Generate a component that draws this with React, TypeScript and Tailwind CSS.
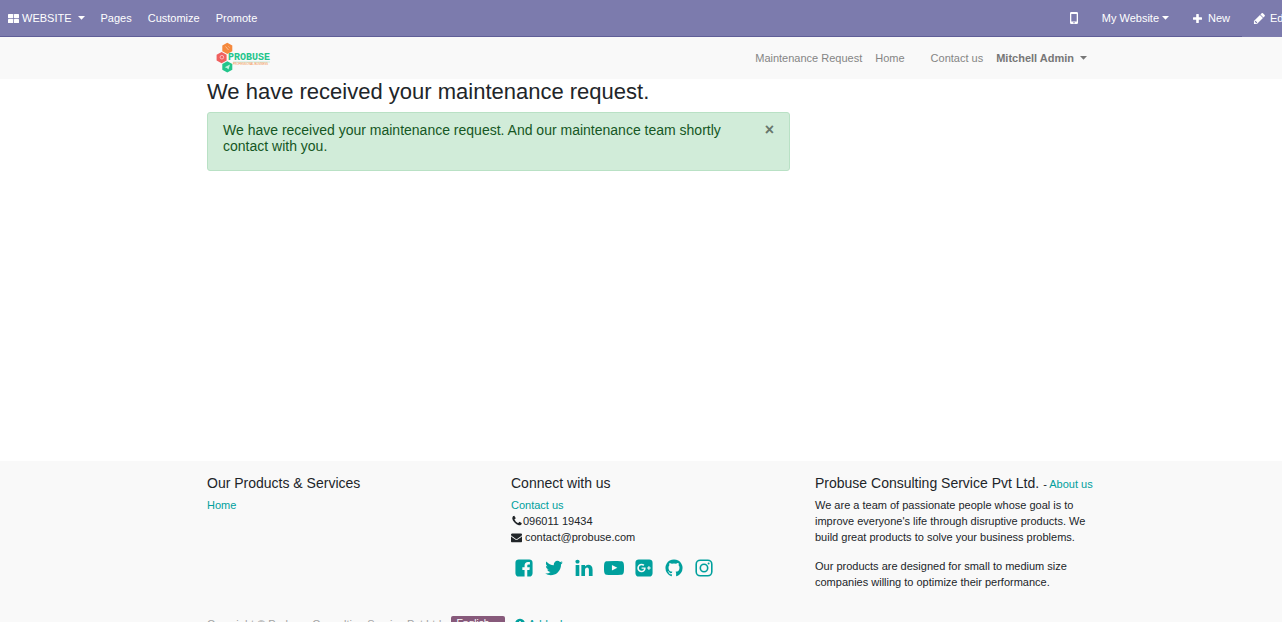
import type { ReactNode } from 'react'

const paths = {
  facebook:
    'M1376 128q119 0 203.5 84.5t84.5 203.5v960q0 119-84.5 203.5t-203.5 84.5h-188v-595h199l30-232h-229v-148q0-56 23.5-84t91.5-28l122-1v-207q-63-9-178-9-136 0-217.5 80t-81.5 226v171h-200v232h200v595h-532q-119 0-203.5-84.5t-84.5-203.5v-960q0-119 84.5-203.5t203.5-84.5h960z',
  twitter:
    'M1684 408q-67 98-162 167 1 14 1 42 0 130-38 259.5t-115.5 248.5-184.5 210.5-258 146-323 54.5q-271 0-496-145 35 4 78 4 225 0 401-138-105-2-188-64.5t-114-159.5q33 5 61 5 43 0 85-11-112-23-185.5-111.5t-73.5-205.5v-4q68 38 146 41-66-44-105-115t-39-154q0-88 44-163 121 149 294.5 238.5t371.5 99.5q-8-38-8-74 0-134 94.5-228.5t228.5-94.5q140 0 236 102 109-21 205-78-37 115-142 178 93-10 186-50z',
  linkedin:
    'M477 625v991h-330v-991h330zm21-306q1 73-50.5 122t-135.5 49h-2q-82 0-132-49t-50-122q0-74 51.5-122.5t134.5-48.5 133 48.5 51 122.5zm1166 729v568h-329v-530q0-105-40.5-164.5t-126.5-59.5q-63 0-105.5 34.5t-63.5 85.5q-11 30-11 81v553h-329q2-399 2-647t-1-296l-1-48h329v144h-2q20-32 41-56t56.5-52 87-43.5 114.5-15.5q171 0 275 113.5t104 332.5z',
  youtube:
    'M711 1128l484-250-484-253v503zm185-862q168 0 324.5 4.5t229.5 9.5l73 4q1 0 17 1.5t23 3 23.5 4.5 28.5 8 28 13 31 19.5 29 26.5q6 6 15.5 18.5t29 58.5 26.5 101q8 64 12.5 136.5t5.5 113.5v176q1 145-18 290-7 55-25 99.5t-32 61.5l-14 17q-14 15-29 26.5t-31 19-28 12.5-28.5 8-24 4.5-23 3-16.5 1.5q-251 19-627 19-207-2-359.5-6.5t-200.5-7.5l-49-4-36-4q-36-5-54.5-10t-51-21-56.5-41q-6-6-15.5-18.5t-29-58.5-26.5-101q-8-64-12.5-136.5t-5.5-113.5v-176q-1-145 18-290 7-55 25-99.5t32-61.5l14-17q14-15 29-26.5t31-19.5 28-13 28.5-8 23.5-4.5 23-3 17-1.5q251-18 627-18z',
  google:
    'M1045 905q0-26-6-64h-362v132h217q-3 24-16.5 50t-37.5 53-66.5 44.5-96.5 17.5q-99 0-169-71t-70-171 70-171 169-71q92 0 153 59l104-101q-108-100-257-100-160 0-272 112.5t-112 271.5 112 271.5 272 112.5q165 0 266.5-105t101.5-270zm345 46h109v-110h-109v-110h-110v110h-110v110h110v110h110v-110zm274-535v960q0 119-84.5 203.5t-203.5 84.5h-960q-119 0-203.5-84.5t-84.5-203.5v-960q0-119 84.5-203.5t203.5-84.5h960q119 0 203.5 84.5t84.5 203.5z',
  github:
    'M896 128q209 0 385.5 103t279.5 279.5 103 385.5q0 251-146.5 451.5t-378.5 277.5q-27 5-40-7t-13-30q0-3 .5-76.5t.5-134.5q0-97-52-142 57-6 102.5-18t94-39 81-66.5 53-105 20.5-150.5q0-119-79-206 37-91-8-204-28-9-81 11t-92 44l-38 24q-93-26-192-26t-192 26q-16-11-42.5-27t-83.5-38.5-85-13.5q-45 113-8 204-79 87-79 206 0 85 20.5 150t52.5 105 80.5 67 94 39 102.5 18q-39 36-49 103-21 10-45 15t-57 5-65.5-21.5-55.5-62.5q-19-32-48.5-52t-49.5-24l-20-3q-21 0-29 4.5t-5 11.5 9 14 13 12l7 5q22 10 43.5 38t31.5 51l10 23q13 38 44 61.5t67 30 69.5 7 55.5-3.5l23-4q0 38 .5 88.500t.5 54.5q0 18-13 30t-40 7q-232-77-378.5-277.5t-146.5-451.5q0-209 103-385.5t279.5-279.5 385.5-103z',
  phone:
    'M1600 1240q0 27-10 70.5t-21 68.5q-21 50-122 106-94 51-186 51-27 0-53-3.5t-57.5-12.5-47-14.5-55.5-20.5-49-18q-98-35-175-83-127-79-264-216t-216-264q-48-77-83-175-3-9-18-49t-20.5-55.5-14.5-47-12.5-57.5-3.5-53q0-92 51-186 56-101 106-122 25-11 68.5-21t70.5-10q14 0 21 3 18 6 53 76 11 19 30 54t35 63.5 31 53.5q3 4 17.5 25t21.5 35.5 7 28.5q0 20-28.5 50t-62 55-62 53-28.5 46q0 9 5 22.5t8.5 20.5 14 24 11.5 19q76 137 174 235t235 174q2 1 19 11.5t24 14 20.5 8.5 22.5 5q18 0 46-28.5t53-62 55-62 50-28.5q14 0 28.5 7t35.5 21.5 25 17.5q25 15 53.5 31t63.5 35 54 30q70 35 76 53 3 7 3 21z',
  envelope:
    'M1792 710v794q0 66-47 113t-113 47h-1472q-66 0-113-47t-47-113v-794q44 49 101 87 362 246 497 345 57 42 92.5 65.5t94.5 48 110 24.5h2q51 0 110-24.5t94.5-48 92.5-65.5q170-123 498-345 57-39 100-87zm0-294q0 79-49 151t-122 123q-376 261-468 325-10 7-42.5 31t-54 38.5-52 32.5-57.5 27-50 9h-2q-23 0-50-9t-57.5-27-52-32.5-54-38.5-42.5-31q-91-64-262-182.5t-205-142.5q-62-42-117-115.5t-55-136.5q0-78 41.5-130t118.5-52h1472q65 0 112.5 47t47.5 113z',
  pencil:
    'M491 1536l91-91-235-235-91 91v107h128v128h107zm469-1120l416 416-832 832h-416v-416zm683 96q0 53-37 90l-166 166-416-416 166-165q36-38 90-38 53 0 91 38l235 234q37 39 37 91z',
  plusCircle:
    'M1344 960v-128q0-26-19-45t-45-19h-256v-256q0-26-19-45t-45-19h-128q-26 0-45 19t-19 45v256h-256q-26 0-45 19t-19 45v128q0 26 19 45t45 19h256v256q0 26 19 45t45 19h128q26 0 45-19t19-45v-256h256q26 0 45-19t19-45zm320-64q0 209-103 385.5t-279.5 279.5-385.5 103-385.5-103-279.5-279.5-103-385.5 103-385.5 279.5-279.5 385.5-103 385.5 103 279.5 279.5 103 385.5z',
}

function Icon({ name, className }: { name: keyof typeof paths; className: string }) {
  return (
    <svg viewBox="0 0 1792 1792" fill="currentColor" className={className} aria-hidden="true">
      <path d={paths[name]} />
    </svg>
  )
}

function Instagram() {
  return (
    <svg viewBox="0 0 20 20" fill="none" stroke="currentColor" className="size-5" aria-hidden="true">
      <rect x="2.2" y="2.2" width="15.6" height="15.6" rx="4" strokeWidth="1.6" />
      <circle cx="10" cy="10" r="3.7" strokeWidth="1.6" />
      <circle cx="14.6" cy="5.4" r="1" fill="currentColor" stroke="none" />
    </svg>
  )
}

function Caret() {
  return (
    <svg viewBox="0 0 7 4" fill="currentColor" className="h-1 w-[7px]" aria-hidden="true">
      <path d="M0 0h7L3.5 3.7z" />
    </svg>
  )
}

function Logo() {
  return (
    <svg viewBox="0 0 56 32" className="h-8 w-14" role="img" aria-label="Probuse">
      <path d="M11.300 .8l5 2.800v5.600l-5 2.800-5-2.800V3.600z" fill="#f5893d" />
      <path d="M5.600 10l5 2.800v5.600l-5 2.800-5-2.800v-5.600z" fill="#f0605f" />
      <path d="M11.300 19.300l5 2.800v5.600l-5 2.800-5-2.800v-5.600z" fill="#23c58b" />
      <path d="M9.500 4.500l3 3.500M12.500 4.500l1 1" stroke="#fbc39a" strokeWidth="1" />
      <circle cx="5.900" cy="15.200" r="1.800" fill="none" stroke="#fbc4c4" strokeWidth=".9" />
      <path d="M8.700 25.300l5.300-2.700-1.500 5-1.600-1.700z" fill="#c3f3df" />
      <text x="12" y="18" fill="#23c58b" fontFamily="Liberation Mono, monospace" fontWeight="700" fontSize="10">
        PROBUSE
      </text>
      <path d="M17 20h37" stroke="#a5e2c8" strokeWidth=".6" />
      <text x="17" y="23" fill="#f5893d" fontFamily="Liberation Sans, sans-serif" fontSize="2.700">
        PROFESSIONAL BUSINESS
      </text>
    </svg>
  )
}

function FooterLink({ children }: { children: ReactNode }) {
  return (
    <a href="#" className="text-[#00a09d]">
      {children}
    </a>
  )
}

const social: { label: string; icon: ReactNode }[] = [
  { label: 'Facebook', icon: <Icon name="facebook" className="size-5" /> },
  { label: 'Twitter', icon: <Icon name="twitter" className="size-5" /> },
  { label: 'LinkedIn', icon: <Icon name="linkedin" className="size-5" /> },
  { label: 'YouTube', icon: <Icon name="youtube" className="size-5" /> },
  { label: 'Google Plus', icon: <Icon name="google" className="size-5" /> },
  { label: 'GitHub', icon: <Icon name="github" className="size-5" /> },
  { label: 'Instagram', icon: <Instagram /> },
]

export default function App() {
  return (
    <div className="h-screen overflow-x-hidden overflow-y-auto bg-white font-['Liberation_Sans',Arial,sans-serif] text-[11px] leading-4 text-[#212529] [scrollbar-width:none]">
      <div className="w-[calc(100%+12px)]">
        <nav className="flex h-[37px] justify-between bg-[#7c7bad] text-white">
          <div className="flex flex-1 items-center gap-4 border-b border-[#5f5e97] pl-2">
            <button className="flex items-center">
              <svg viewBox="0 0 11 9" fill="currentColor" className="mr-[3px] h-[9px] w-[11px]" aria-hidden="true">
                <rect width="5.200" height="4.200" rx=".6" />
                <rect x="5.900" width="5.100" height="4.200" rx=".6" />
                <rect y="4.900" width="5.200" height="4.100" rx=".6" />
                <rect x="5.900" y="4.900" width="5.100" height="4.100" rx=".6" />
              </svg>
              <span className="mr-[6px]">WEBSITE</span>
              <Caret />
            </button>
            <a href="#">Pages</a>
            <button>Customize</button>
            <button>Promote</button>
          </div>
          <div className="flex items-center gap-6 border-b border-[#5f5e97] pr-3">
            <button aria-label="Mobile preview">
              <svg viewBox="0 0 8 12" className="block h-3 w-2" aria-hidden="true">
                <path
                  fill="currentColor"
                  fillRule="evenodd"
                  d="M1.300 0h5.400Q8 0 8 1.300v9.400Q8 12 6.700 12H1.300Q0 12 0 10.700V1.300Q0 0 1.300 0zM1.300 2v7.500h5.400V2zM4 10.100a.7.7 0 1 0 0 1.400.7.7 0 0 0 0-1.400z"
                />
              </svg>
            </button>
            <button className="flex items-center gap-[3px]">
              My Website
              <Caret />
            </button>
            <button className="flex items-center gap-[6px]">
              <svg viewBox="0 0 9 9" fill="currentColor" className="size-[9px]" aria-hidden="true">
                <path d="M3.200 .5q0-.5.500-.5h1.600q.5 0 .5.500v2.700h2.700q.5 0 .5.500v1.600q0 .5-.5.500H5.800v2.700q0 .5-.5.500H3.700q-.5 0-.5-.5V5.800H.5q-.5 0-.5-.5V3.700q0-.5.500-.5h2.700z" />
              </svg>
              New
            </button>
          </div>
          <button className="flex items-center gap-1 border-b border-transparent pr-[5px] pl-[11px]">
            <Icon name="pencil" className="size-[13px]" />
            Edit
          </button>
        </nav>

        <header className="bg-[#f9f9f9]">
          <div className="mx-auto flex h-[42px] w-[912px] items-center justify-between px-4 text-[#858585]">
            <a href="#" className="pl-[9px]">
              <Logo />
            </a>
            <nav className="flex items-center gap-[13px]">
              <a href="#">Maintenance Request</a>
              <a href="#" className="pr-[13px]">
                Home
              </a>
              <a href="#">Contact us</a>
              <button className="flex items-center gap-[6px] font-bold text-[#777777]">
                Mitchell Admin
                <Caret />
              </button>
            </nav>
          </div>
        </header>

        <main className="mx-auto min-h-[382px] w-[912px] px-4">
          <h1 className="pt-px text-[22px] leading-6">We have received your maintenance request.</h1>
          <div
            role="alert"
            className="mt-2 flex w-[583px] items-start justify-between rounded-[3px] border border-[#b9e1c5] bg-[#d1ecd9] px-[15px] pt-[9px] pb-4 text-[14px] text-[#155724]"
          >
            <p className="max-w-[510px]">
              We have received your maintenance request. And our maintenance team shortly contact with you.
            </p>
            <button aria-label="Close" className="text-[16px] font-bold text-[#68766c]">
              ×
            </button>
          </div>
        </main>

        <footer className="bg-[#f9f9f9] pt-[14px]">
          <div className="mx-auto w-[912px]">
            <div className="grid min-h-[140px] grid-cols-3">
              <section className="pl-4">
                <h2 className="mb-[6px] text-[14px]">Our Products &amp; Services</h2>
                <FooterLink>Home</FooterLink>
              </section>
              <section className="pl-4">
                <h2 className="mb-[6px] text-[14px]">Connect with us</h2>
                <FooterLink>Contact us</FooterLink>
                <p className="flex items-center">
                  <Icon name="phone" className="size-[12px]" />
                  096011 19434
                </p>
                <p className="flex items-center gap-[3px]">
                  <Icon name="envelope" className="size-[11px]" />
                  contact@probuse.com
                </p>
                <div className="mt-[13px] flex gap-[10px] pl-[3px] text-[#00a09d]">
                  {social.map(({ label, icon }) => (
                    <a key={label} href="#" aria-label={label}>
                      {icon}
                    </a>
                  ))}
                </div>
              </section>
              <section className="pl-4">
                <div className="mb-[5px] flex items-baseline gap-1 whitespace-nowrap">
                  <h2 className="text-[14px]">Probuse Consulting Service Pvt Ltd.</h2>
                  <span>
                    - <FooterLink>About us</FooterLink>
                  </span>
                </div>
                <p className="mb-[13px] max-w-[280px]">
                  We are a team of passionate people whose goal is to improve everyone's life through disruptive
                  products. We build great products to solve your business problems.
                </p>
                <p className="max-w-[280px]">
                  Our products are designed for small to medium size companies willing to optimize their performance.
                </p>
              </section>
            </div>
            <div className="flex items-center px-4 pb-4 text-[#a3a3a3]">
              <span>Copyright © Probuse Consulting Service Pvt Ltd.</span>
              <button className="mt-px ml-[7px] flex items-center gap-1 rounded-[2px] bg-[#875a7b] px-[5px] text-[10px] text-white">
                English
                <Caret />
              </button>
              <a href="#" className="ml-[9px] flex items-center gap-[2px] text-[#00a09d]">
                <Icon name="plusCircle" className="size-[12px]" />
                Add a language...
              </a>
            </div>
          </div>
        </footer>
      </div>
    </div>
  )
}
